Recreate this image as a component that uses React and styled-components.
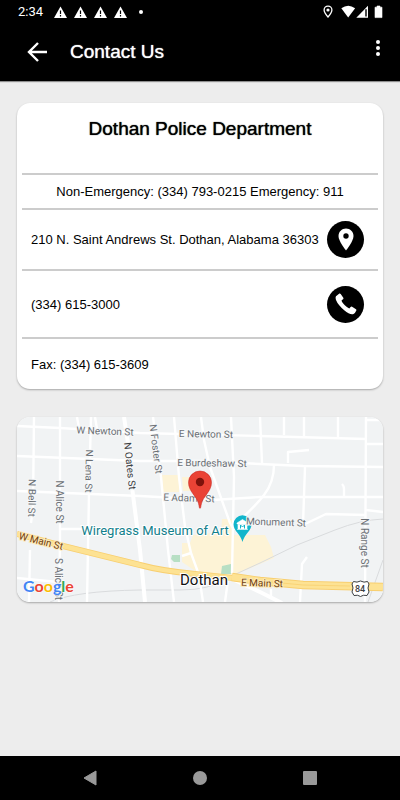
import React from 'react'
import styled, { createGlobalStyle } from 'styled-components'

const streets = [
  'M34 417 L33 507 L31 523', 'M30 550 L29 602',
  'M60 417 L60 543 L59 602',
  'M91 417 L89 493 L87 602',
  'M77 417 L79 428', 'M95 417 L97 429',
  'M153 417 L161 477 L168 550 L174 602',
  'M174 417 L179 477 L185 527 L191 553 L199 575 L203 602',
  'M182 556 L191 553',
  'M201 417 L204 440 L210 467 L230 523 L234 530',
  'M231 417 L234 477 L232 573', 'M228 580 L225 602',
  'M260 417 L262 463',
  'M284 417 V435', 'M304 417 V436', 'M338 417 V437',
  'M366 417 L365 602', 'M366 420 H383', 'M366 444 H383',
  'M17 426 L60 428 L140 433 L260 436 L366 439',
  'M17 456 L140 461 L200 461 L260 464 L303 466 L383 467',
  'M17 491 L140 496 L213 500 L260 497 H383',
  'M60 529 H82',
  'M288 463 V452 L309 450',
  'M274 465 Q274 482 264 495 Q254 508 232 527',
  'M305 467 L303 525 L326 514 L366 515', 'M366 510 L383 512',
  'M342 484 Q344 486 344 489 V496',
  'M307 557 L302 564 L300 602',
  'M271 589 V597',
  'M17 578 L58 582',
]

const railways = [
  'M50 602 Q75 591 140 590 H180 Q210 590 225 579 L260 563 L297 545 L335 530 Q360 520 383 519',
  'M368 602 L383 560',
]

const mainStreet = 'M17 534 L63 546 L140 565 Q162 571 195 574 L260 581 L303 585 L383 587'

// x, y is the middle of the label
const labels = [
  { text: 'W Newton St', x: 105, y: 431, angle: 2 },
  { text: 'E Newton St', x: 206, y: 434, angle: 1 },
  { text: 'E Burdeshaw St', x: 212, y: 463, angle: 1 },
  { text: 'E Adams St', x: 189, y: 498, angle: 2 },
  { text: 'Monument St', x: 276, y: 522, angle: 2 },
  { text: 'N Bell St', x: 32, y: 498, angle: 91 },
  { text: 'N Alice St', x: 59, y: 502, angle: 90 },
  { text: 'S Alice St', x: 58, y: 579, angle: 90 },
  { text: 'N Lena St', x: 89, y: 471, angle: 91 },
  { text: 'N Oates St', x: 130, y: 466, angle: 84, color: '#3c4043' },
  { text: 'N Foster St', x: 156, y: 449, angle: 83 },
  { text: 'N Range St', x: 364, y: 543, angle: 90 },
  { text: 'W Main St', x: 41, y: 541, angle: 14, color: '#70400f', halo: '#fde9b8' },
  { text: 'E Main St', x: 262, y: 583, angle: 2, color: '#70400f', halo: '#fde9b8' },
]

const WarningIcon = () => (
  <svg width='13' height='12' viewBox='0 0 13 12'>
    <path d='M6.5 0.5 L13 12 H0 Z' fill='#fff' />
    <path d='M6.5 4.5 V8 M6.5 9 V10.4' stroke='#000' strokeWidth='1.2' />
  </svg>
)

const StatusIcons = () => (
  <svg width='60' height='14' viewBox='0 0 60 14'>
    <path d='M5 1.1 C2.8 1.1 1.1 2.8 1.1 5 C1.1 7.7 5 12 5 12 C5 12 8.9 7.7 8.9 5 C8.9 2.8 7.2 1.1 5 1.1 Z' fill='none' stroke='#fff' strokeWidth='1.3' />
    <circle cx='5' cy='5' r='1.6' fill='#fff' />
    <path d='M18.3 3.2 Q25.2 -1.8 32.1 3.2 L25.2 12.6 Z' fill='#fff' />
    <path d='M45 0.8 V12.8 H33.3 Z' fill='#fff' />
    <path d='M43 4.3 V11.5' stroke='#000' strokeWidth='1.4' />
    <path d='M52 2.2 H54 V1 H57 V2.2 H59 V12.6 H52 Z' fill='#fff' stroke='#fff' strokeLinejoin='round' strokeWidth='0.6' />
  </svg>
)

const Map = () => (
  <MapDrawing viewBox='17 417 366 185' role='img' aria-label='Map of Dothan'>
    <rect x='17' y='417' width='366' height='185' fill='#f1f3f4' />
    <g fill='#fdf3d6'>
      <path d='M162 475 H179 V492 H163 Z M182 477 H192 V491 H183 Z' />
      <path d='M222 519 H233 V535 H265 L271 547 L274 558 L232 576 L200 574 L182 562 V543 H190 L193 535 L221 532 Z' />
    </g>
    <path d='M172 555 H180 V562 H174 L171 559 Z M222 566 L231 564 V574 H221 Z' fill='#b7dfc4' />
    <g fill='none' stroke='#d9dbdd' strokeWidth='1'>
      {railways.map((d) => <path key={d} d={d} />)}
    </g>
    <g fill='none' stroke='#fff' strokeWidth='2.4' strokeLinejoin='round'>
      {streets.map((d) => <path key={d} d={d} />)}
      <path d='M124 417 L128 443 L132 487 L140 550 L145 602' strokeWidth='4' />
      <path d='M230 578 L260 592 L282 603' strokeWidth='4' />
    </g>
    <g fill='none'>
      <path d={mainStreet} stroke='#f8cf70' strokeWidth='6' />
      <path d={mainStreet} stroke='#fde293' strokeWidth='4.4' />
      <path d='M232 577 L260 581 L303 585 L383 587' stroke='#f8cf70' strokeWidth='8.4' />
      <path d='M232 577 L260 581 L303 585 L383 587' stroke='#fde293' strokeWidth='6.6' />
      <path d='M250 580 L303 585 L350 586' stroke='#f8cf70' strokeWidth='0.8' />
    </g>
    <path d='M242.5 542 C240.5 534 233.5 531 233.5 524.3 A9 9 0 0 1 251.5 524.3 C251.5 531 244.5 534 242.5 542 Z' fill='#12b5cb' />
    <path d='M237 523 L242.5 519.5 L248 523 V524 H237 Z M238 524.5 H247 V529 H238 Z M237 529.5 H248' fill='#fff' stroke='#fff' strokeWidth='0.6' />
    <path d='M240.5 528.5 V525 L242.5 527 L244.5 525 V528.5' fill='none' stroke='#12b5cb' strokeWidth='1' />
    {labels.map(({ text, x, y, angle, color, halo }) => (
      <StreetName key={text} x={x} y={y} transform={`rotate(${angle} ${x} ${y})`} $color={color} $halo={halo}>
        {text}
      </StreetName>
    ))}
    <PlaceName x='155' y='530' $size={13} $color='#12808c'>Wiregrass Museum of Art</PlaceName>
    <PlaceName x='204' y='580' $size={15} $color='#111'>Dothan</PlaceName>
    <path d='M200 508.5 C199.2 508.5 199.2 506 198.5 503.5 C197 496.5 188.5 491.5 188.5 482.5 A11.5 11.5 0 0 1 211.5 482.5 C211.5 491.5 203 496.5 201.5 503.5 C200.8 506 200.8 508.5 200 508.5 Z' fill='#ea4335' stroke='#c5221f' strokeWidth='0.5' />
    <circle cx='200' cy='482' r='4.2' fill='#7d120b' />
    <path d='M353.5 581.5 Q357 583 360.5 581 Q364 583 367.5 581.5 L369 584 Q367 588 369 592 L367 595.5 Q363 594.5 360.5 596.5 Q358 594.5 354 595.5 L352 592 Q354 588 352 584 Z' fill='#fff' stroke='#3c4043' strokeWidth='1' />
    <ShieldNumber x='360' y='589'>84</ShieldNumber>
    <GoogleText x='23' y='592'>
      <tspan fill='#4285f4'>G</tspan>
      <tspan fill='#ea4335'>o</tspan>
      <tspan fill='#fbbc04'>o</tspan>
      <tspan fill='#4285f4'>g</tspan>
      <tspan fill='#34a853'>l</tspan>
      <tspan fill='#ea4335'>e</tspan>
    </GoogleText>
  </MapDrawing>
)

const App = () => {
  return (
    <>
      <GlobalStyle />
      <Screen>
        <Header>
          <StatusBar>
            <Clock>2:34</Clock>
            <Warnings>
              <WarningIcon />
              <WarningIcon />
              <WarningIcon />
              <WarningIcon />
              <Dot />
            </Warnings>
            <StatusIcons />
          </StatusBar>
          <Toolbar>
            <IconButton aria-label='Back'>
              <svg width='20' height='20' viewBox='0 0 20 20' fill='none' stroke='#fff' strokeWidth='2.4'>
                <path d='M20 10 H2 M11 1 L2 10 L11 19' />
              </svg>
            </IconButton>
            <PageTitle>Contact Us</PageTitle>
            <MenuButton aria-label='More options'>
              <svg width='4' height='16' viewBox='0 0 4 16' fill='#fff'>
                <circle cx='2' cy='2' r='2' />
                <circle cx='2' cy='8' r='2' />
                <circle cx='2' cy='14' r='2' />
              </svg>
            </MenuButton>
          </Toolbar>
        </Header>
        <Content>
          <Card>
            <Department>Dothan Police Department</Department>
            <Row $height={35} $center>
              <p>Non-Emergency: (334) 793-0215 Emergency: 911</p>
            </Row>
            <Row $height={61}>
              <p>210 N. Saint Andrews St. Dothan, Alabama 36303</p>
              <RoundButton aria-label='Show on map'>
                <svg width='16' height='23' viewBox='0 0 16 23'>
                  <path d='M8 0.5 C3.8 0.5 0.5 3.8 0.5 8 C0.5 13.5 8 22.5 8 22.5 C8 22.5 15.5 13.5 15.5 8 C15.5 3.8 12.2 0.5 8 0.5 Z' fill='#fff' />
                  <circle cx='8' cy='8' r='2.7' fill='#000' />
                </svg>
              </RoundButton>
            </Row>
            <Row $height={68}>
              <p>(334) 615-3000</p>
              <RoundButton aria-label='Call'>
                <svg width='22' height='22' viewBox='0 0 22 22'>
                  <path d='M1 3.2 L4.4 0.6 Q5.2 0.3 5.7 1 L8.3 4.8 Q8.7 5.7 8 6.3 L6.5 7.6 Q6.7 9 9.8 12.3 Q12.6 15 14.3 15.4 L15.6 13.9 Q16.3 13.2 17.1 13.7 L21 16.2 Q21.7 16.8 21.3 17.6 Q20.2 20.3 18.5 21 Q15 22.2 9.2 17.2 Q3 12 1 7 Q0.2 4.5 1 3.2 Z' fill='#fff' />
                </svg>
              </RoundButton>
            </Row>
            <Row $height={52}>
              <p>Fax: (334) 615-3609</p>
            </Row>
          </Card>
          <Card>
            <Map />
          </Card>
        </Content>
        <NavBar>
          <NavButton aria-label='Back'>
            <svg width='14' height='16' viewBox='0 0 14 16'>
              <path d='M13 1 V15 L1 8 Z' fill='#999' stroke='#999' strokeLinejoin='round' />
            </svg>
          </NavButton>
          <NavButton aria-label='Home'>
            <svg width='14' height='14' viewBox='0 0 14 14'>
              <circle cx='7' cy='7' r='7' fill='#999' />
            </svg>
          </NavButton>
          <NavButton aria-label='Recent apps'>
            <svg width='14' height='14' viewBox='0 0 14 14'>
              <rect width='14' height='14' rx='1' fill='#999' />
            </svg>
          </NavButton>
        </NavBar>
      </Screen>
    </>
  )
}

const GlobalStyle = createGlobalStyle`
    * {
        box-sizing : border-box;
    }
    body {
        margin : 0;
        background-color : #ededed;
        font-family : 'Liberation Sans', Arial, sans-serif;
    }
    h1, h2, p {
        margin : 0;
    }
    svg {
        display : block;
    }
    button {
        padding : 0;
        border : none;
        background : none;
        cursor : pointer;
    }
`

const Screen = styled.div`
    display : flex;
    flex-direction : column;
    min-height : 100vh;
`

const Header = styled.header`
    background-color : #000;
    color : #fff;
    box-shadow : 0 1px 1px rgba(0, 0, 0, 0.4);
`

const StatusBar = styled.div`
    display : flex;
    align-items : center;
    height : 23px;
    padding : 0 17px 0 18px;
`

const Clock = styled.span`
    width : 36px;
    font : 400 13px Roboto, sans-serif;
`

const Warnings = styled.div`
    display : flex;
    flex : 1;
    align-items : center;
    gap : 7px;
`

const Dot = styled.span`
    width : 4px;
    height : 4px;
    margin-left : 5px;
    border-radius : 50%;
    background-color : #fff;
`

const Toolbar = styled.div`
    display : flex;
    align-items : center;
    height : 58px;
    padding : 0 20px 0 27px;
`

const IconButton = styled.button`
    display : flex;
`

const MenuButton = styled(IconButton)`
    padding-bottom : 8px;
`

const PageTitle = styled.h1`
    flex : 1;
    margin-left : 23px;
    font-size : 19px;
    font-weight : 400;
    text-shadow : 0 0 1px #fff;
`

const Content = styled.main`
    display : flex;
    flex : 1;
    flex-direction : column;
    gap : 28px;
    padding : 22px 17px;
`

const Card = styled.section`
    overflow : hidden;
    border-radius : 13px;
    background-color : #fff;
    box-shadow : 0 1px 2px rgba(0, 0, 0, 0.3);
`

const Department = styled.h2`
    height : 70px;
    padding-top : 14px;
    font-size : 19px;
    font-weight : 400;
    line-height : 24px;
    text-align : center;
    text-shadow : 0 0 1px #000;
`

const Row = styled.div`
    display : flex;
    align-items : center;
    justify-content : ${({ $center }) => ($center ? 'center' : 'space-between')};
    min-height : ${({ $height }) => $height}px;
    margin : 0 5px;
    padding : ${({ $center }) => ($center ? '0 9px' : '0 14px 0 9px')};
    border-top : 2px solid #ccc;
    font-size : 13px;
`

const RoundButton = styled.button`
    display : flex;
    flex-shrink : 0;
    align-items : center;
    justify-content : center;
    width : 37px;
    height : 37px;
    border-radius : 50%;
    background-color : #000;
`

const MapDrawing = styled.svg`
    width : 100%;
    height : auto;
    font-family : Roboto, sans-serif;
`

const StreetName = styled.text`
    fill : ${({ $color }) => $color || '#6b7075'};
    font-size : 10px;
    text-anchor : middle;
    dominant-baseline : central;
    paint-order : stroke;
    stroke : ${({ $halo }) => $halo || '#f6f7f8'};
    stroke-width : 2px;
`

const PlaceName = styled.text`
    fill : ${({ $color }) => $color};
    font-size : ${({ $size }) => $size}px;
    text-anchor : middle;
    dominant-baseline : central;
    paint-order : stroke;
    stroke : #fff;
    stroke-width : 2px;
`

const ShieldNumber = styled.text`
    fill : #3c4043;
    font-size : 9px;
    font-weight : 500;
    text-anchor : middle;
    dominant-baseline : central;
`

const GoogleText = styled.text`
    font-family : Lato, sans-serif;
    font-size : 16px;
    font-weight : 700;
    paint-order : stroke;
    stroke : #fff;
    stroke-width : 1px;
`

const NavBar = styled.nav`
    display : flex;
    height : 44px;
    padding : 0 35px;
    background-color : #000;
`

const NavButton = styled.button`
    display : flex;
    flex : 1;
    align-items : center;
    justify-content : center;
`

export default App
